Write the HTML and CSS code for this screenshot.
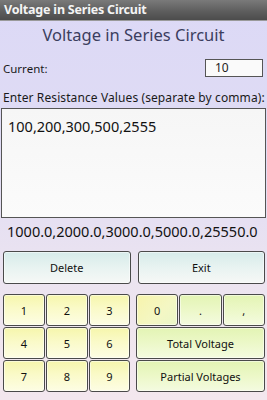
FILE: index.html
```html
<!DOCTYPE html>
<html>
<head>
<meta charset="utf-8">
<link rel="stylesheet" href="styles.css">
</head>
<body>
<div class="titlebar">Voltage in Series Circuit</div>
<div class="content">
  <h1 class="heading">Voltage in Series Circuit</h1>
  <div class="current-row">
    <span class="label">Current:</span>
    <div class="input-small">10</div>
  </div>
  <div class="label label-res">Enter Resistance Values (separate by comma):</div>
  <div class="textarea">100,200,300,500,2555</div>
  <div class="result">1000.0,2000.0,3000.0,5000.0,25550.0</div>
  <div class="action-row">
    <div class="btn btn-action">Delete</div>
    <div class="btn btn-action">Exit</div>
  </div>
  <div class="pad">
    <div class="numgrid">
      <div class="btn key">1</div>
      <div class="btn key">2</div>
      <div class="btn key">3</div>
      <div class="btn key">4</div>
      <div class="btn key">5</div>
      <div class="btn key">6</div>
      <div class="btn key">7</div>
      <div class="btn key">8</div>
      <div class="btn key">9</div>
    </div>
    <div class="opgrid">
      <div class="btn key key-zero">0</div>
      <div class="btn key key-green">.</div>
      <div class="btn key key-green">,</div>
      <div class="btn key key-green key-wide">Total Voltage</div>
      <div class="btn key key-green key-wide">Partial Voltages</div>
    </div>
  </div>
</div>
</body>
</html>
```
FILE: styles.css
```css
html, body {
  margin: 0;
  padding: 0;
}
body {
  width: 267px;
  height: 400px;
  overflow: hidden;
  font-family: "Noto Sans", "Open Sans", sans-serif;
  background: linear-gradient(180deg, #dcd9f6 0%, #e0dcf4 40%, #ece4f0 70%, #f3e7ee 100%);
  color: #111;
}
.titlebar {
  height: 21px;
  box-sizing: border-box;
  padding: 2px 0 0 4px;
  background: linear-gradient(180deg, #7a7a7a 0%, #5e5e5e 55%, #4c4c4c 100%);
  border-bottom: 1px solid #9a9a9a;
  color: #f4f4f4;
  font-weight: bold;
  font-size: 12.5px;
  line-height: 16px;
  letter-spacing: -0.2px;
}
.content {
  display: flex;
  flex-direction: column;
}
.heading {
  margin: 2px 0 0 0;
  text-align: center;
  font-weight: normal;
  font-size: 16.5px;
  line-height: 24px;
  color: #3b3e5e;
}
.current-row {
  display: flex;
  align-items: center;
  justify-content: space-between;
  margin-top: 12px;
  padding: 0 4px 0 3px;
}
.label {
  font-size: 11.5px;
  color: #1a1a1a;
}
.input-small {
  width: 58px;
  height: 18px;
  box-sizing: border-box;
  border: 1px solid #555;
  background: #fafafa;
  font-size: 12px;
  line-height: 16px;
  padding-left: 9px;
  color: #222;
}
.label-res {
  margin-top: 14px;
  padding-left: 3px;
  line-height: 14px;
  font-size: 12px;
  letter-spacing: 0.1px;
}
.textarea {
  margin: 3px 1px 0 1px;
  height: 110px;
  box-sizing: border-box;
  border: 1px solid #555;
  background: linear-gradient(180deg, #f6f6f6, #fbfbfb);
  padding: 7px 6px;
  font-size: 14.5px;
  line-height: 20px;
  color: #111;
}
.result {
  margin-top: 3px;
  padding-left: 7px;
  font-size: 14.5px;
  line-height: 20px;
  color: #111;
}
.action-row {
  display: flex;
  gap: 7px;
  margin: 10px 2px 0 3px;
}
.btn {
  display: flex;
  align-items: center;
  justify-content: center;
  box-sizing: border-box;
  border: 1px solid #4a4a4a;
  border-radius: 3px;
  font-size: 11px;
  color: #111;
  box-shadow: inset 0 0 0 1px rgba(255,255,255,0.5);
}
.btn-action {
  flex: 1;
  height: 33px;
  background: linear-gradient(180deg, #d6ebea 0%, #e8f3f1 50%, #f6f8f6 100%);
}
.pad {
  display: flex;
  gap: 6px;
  margin: 10px 2px 0 3px;
}
.numgrid {
  display: grid;
  grid-template-columns: 42px 42px 41px;
  grid-auto-rows: 32px;
  gap: 1px 1px;
}
.opgrid {
  flex: 1;
  display: grid;
  grid-template-columns: 1fr 1fr 1fr;
  grid-auto-rows: 32px;
  gap: 1px 1px;
}
.key {
  background: linear-gradient(180deg, #f6f6ac 0%, #fafac8 45%, #fdfde4 100%);
}
.key-zero {
  background: linear-gradient(135deg, #f7f4ac 0%, #f4f7c4 60%, #eaf6c8 100%);
}
.key-green {
  background: linear-gradient(180deg, #e3f4b4 0%, #ecf8c8 50%, #f4fbe0 100%);
}
.key-wide {
  grid-column: 1 / span 3;
}
```
